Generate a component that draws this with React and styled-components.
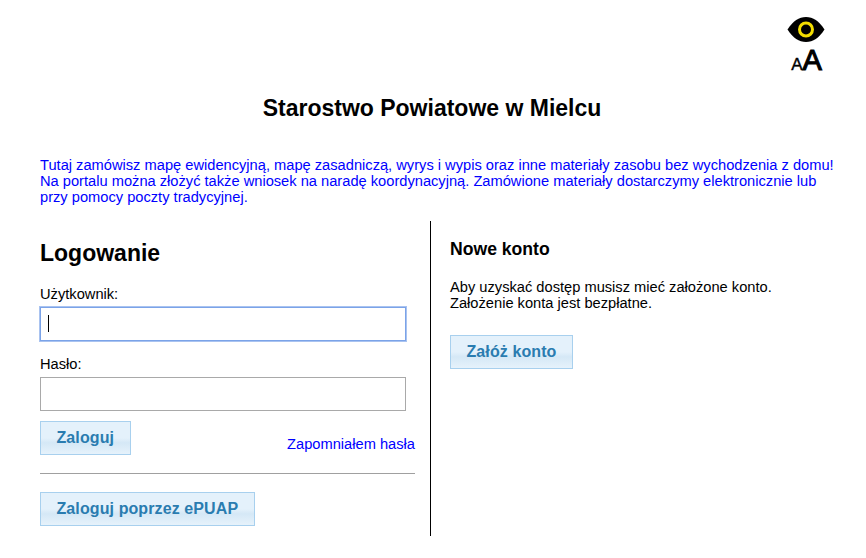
import React from "react";
import styled, { createGlobalStyle } from "styled-components";

const Global = createGlobalStyle`
  html, body {
    margin: 0;
    padding: 0;
    background: #fff;
  }
  body {
    font-family: "Liberation Sans", Arial, sans-serif;
    font-size: 14.67px;
    color: #000;
  }
`;

const Page = styled.div`
  width: 866px;
  height: 558px;
  overflow: hidden;
  box-sizing: border-box;
  padding: 17px 32px 0 40px;
`;

const Access = styled.div`
  display: flex;
  flex-direction: column;
  align-items: flex-end;
  height: 55px;
  padding-right: 9px;
`;

const EyeIcon = styled.svg`
  flex: none;
`;

const AccessSize = styled.div`
  display: flex;
  flex: none;
  align-items: baseline;
  justify-content: center;
  width: 38px;
  height: 25px;
  margin-top: 3px;
  padding-left: 1px;
  box-sizing: border-box;
  line-height: 31px;
  color: #000;
`;

const SmallA = styled.span`
  font-size: 17px;
  -webkit-text-stroke: 0.4px #000;
`;

const BigA = styled.span`
  font-size: 29px;
  -webkit-text-stroke: 1.1px #000;
`;

const Title = styled.h1`
  margin: 22px 0 0;
  padding-right: 10px;
  font-size: 23px;
  line-height: 28px;
  font-weight: 700;
  text-align: center;
`;

const Intro = styled.p`
  margin: 35px 0 0;
  color: #0000ff;
  font-size: 14.67px;
  line-height: 16px;
`;

const Columns = styled.div`
  display: flex;
  margin-top: 16px;
  height: 315px;
`;

const LoginColumn = styled.section`
  width: 375px;
  padding-right: 15px;
  border-right: 1px solid #000;
`;

const NewColumn = styled.section`
  flex: 1;
  padding: 18px 0 0 19px;
`;

const LoginTitle = styled.h2`
  margin: 18px 0 0;
  font-size: 23px;
  line-height: 28px;
  font-weight: 700;
`;

const Label = styled.label`
  display: block;
  margin-top: ${(p) => p.$top}px;
  font-size: 14.67px;
  line-height: 16px;
`;

const Input = styled.input`
  display: block;
  box-sizing: border-box;
  width: 366px;
  height: 34px;
  margin-top: 5px;
  padding: 0 7px;
  font-family: inherit;
  font-size: 14.67px;
  background: #fff;
  border: 1px solid ${(p) => (p.$focus ? "#7ba3e8" : "#a9a9a9")};
  box-shadow: ${(p) => (p.$focus ? "0 0 0 1px #a9c3f0" : "none")};
  outline: 0;
`;

const Caret = styled.span`
  position: absolute;
  left: 8px;
  top: 8px;
  width: 1px;
  height: 17px;
  background: #000;
`;

const InputWrap = styled.div`
  position: relative;
  margin-top: 5px;
  width: 366px;

  ${Input} {
    margin-top: 0;
  }
`;

const ActionRow = styled.div`
  display: flex;
  justify-content: space-between;
  align-items: flex-end;
  margin-top: 10px;
`;

const Button = styled.button`
  display: block;
  box-sizing: border-box;
  height: 34px;
  padding: 0 15.5px;
  font-family: inherit;
  font-size: 16px;
  font-weight: 700;
  letter-spacing: 0.1px;
  color: #2a7cb0;
  border: 1px solid #a8d0ee;
  background: linear-gradient(
    to bottom,
    #e4f1fb 0%,
    #e4f1fb 50%,
    #d5e8f6 65%,
    #e6f2fb 100%
  );
  cursor: pointer;
`;

const Forgot = styled.a`
  color: #0000ff;
  font-size: 14.67px;
  line-height: 16px;
  margin-bottom: 3px;
  text-decoration: none;
`;

const Rule = styled.hr`
  margin: 18px 0;
  border: 0;
  height: 1px;
  background: #a0a0a0;
`;

const NewTitle = styled.h3`
  margin: 0;
  font-size: 17.6px;
  line-height: 20px;
  font-weight: 700;
`;

const NewText = styled.p`
  margin: 20px 0 24px;
  font-size: 14.67px;
  line-height: 16px;
`;

const Eye = () => (
  <EyeIcon width="38" height="25" viewBox="0 0 38 25">
    <path d="M0.5 12.5C6 4 12 0 19 0s13 4 18.5 12.5C32 21 26 25 19 25S6 21 0.5 12.5z" fill="#000" />
    <circle cx="19" cy="12.5" r="6.5" fill="#000" stroke="#f2dc00" strokeWidth="3" />
  </EyeIcon>
);

export default function App() {
  return (
    <Page>
      <Global />
      <Access>
        <Eye />
        <AccessSize>
          <SmallA>A</SmallA>
          <BigA>A</BigA>
        </AccessSize>
      </Access>
      <Title>Starostwo Powiatowe w Mielcu</Title>
      <Intro>
        Tutaj zamówisz mapę ewidencyjną, mapę zasadniczą, wyrys i wypis oraz inne materiały zasobu bez wychodzenia z domu!
        <br />
        Na portalu można złożyć także wniosek na naradę koordynacyjną. Zamówione materiały dostarczymy elektronicznie lub
        <br />
        przy pomocy poczty tradycyjnej.
      </Intro>
      <Columns>
        <LoginColumn>
          <LoginTitle>Logowanie</LoginTitle>
          <Label $top={19}>Użytkownik:</Label>
          <InputWrap>
            <Input $focus type="text" />
            <Caret />
          </InputWrap>
          <Label $top={15}>Hasło:</Label>
          <Input type="password" />
          <ActionRow>
            <Button>Zaloguj</Button>
            <Forgot href="#">Zapomniałem hasła</Forgot>
          </ActionRow>
          <Rule />
          <Button>Zaloguj poprzez ePUAP</Button>
        </LoginColumn>
        <NewColumn>
          <NewTitle>Nowe konto</NewTitle>
          <NewText>
            Aby uzyskać dostęp musisz mieć założone konto.
            <br />
            Założenie konta jest bezpłatne.
          </NewText>
          <Button>Załóż konto</Button>
        </NewColumn>
      </Columns>
    </Page>
  );
}
